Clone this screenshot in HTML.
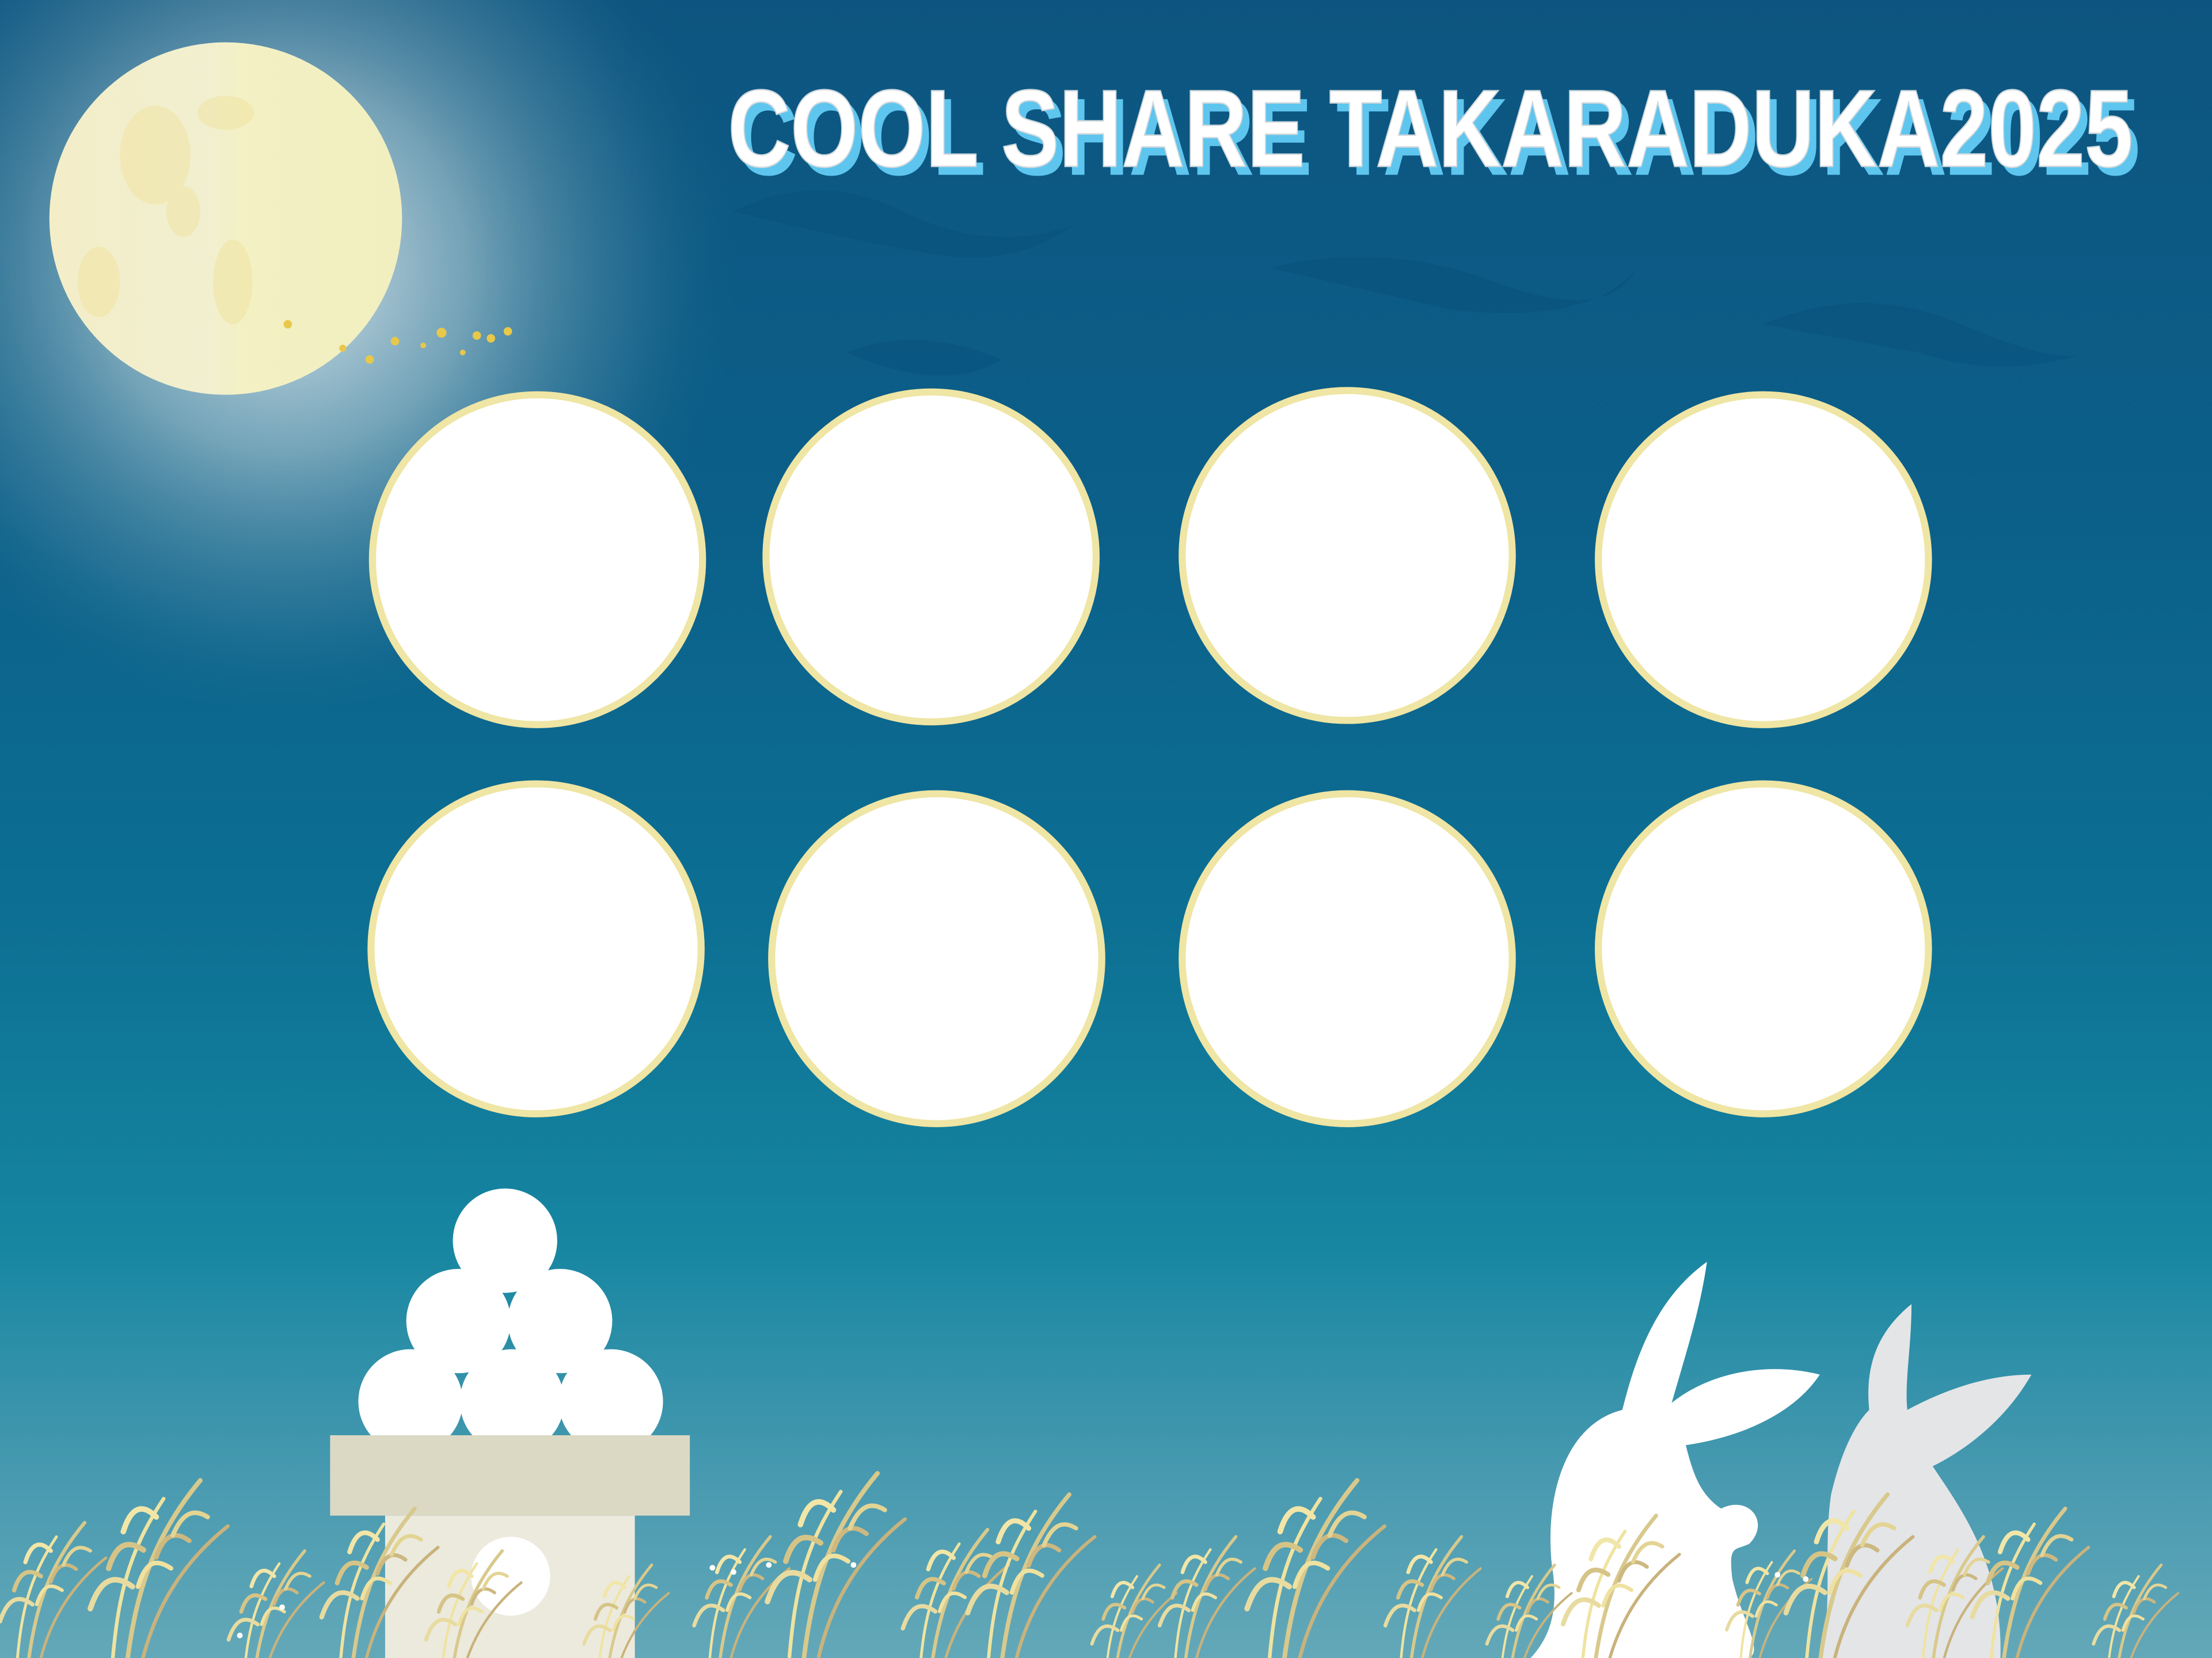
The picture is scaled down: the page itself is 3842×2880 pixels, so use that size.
<!DOCTYPE html>
<html><head><meta charset="utf-8"><style>html,body{margin:0;padding:0;overflow:hidden;background:#0c5e86}svg{display:block}</style></head>
<body>
<svg width="3842" height="2880" viewBox="0 0 1568 1176" preserveAspectRatio="none" xmlns="http://www.w3.org/2000/svg">
<defs>
<linearGradient id="bg" x1="0" y1="0" x2="0" y2="1">
<stop offset="0" stop-color="#0d5580"/><stop offset="0.3" stop-color="#0b5f89"/><stop offset="0.55" stop-color="#0c6f93"/><stop offset="0.75" stop-color="#1686a1"/><stop offset="0.9" stop-color="#4b9bb1"/><stop offset="1" stop-color="#63a8b8"/>
</linearGradient>
<radialGradient id="glow" cx="200" cy="190" r="330" gradientUnits="userSpaceOnUse">
<stop offset="0" stop-color="#ffffff" stop-opacity="0.85"/><stop offset="0.4" stop-color="#c8dde0" stop-opacity="0.55"/><stop offset="0.75" stop-color="#6c9fb3" stop-opacity="0.25"/><stop offset="1" stop-color="#0c5e86" stop-opacity="0"/>
</radialGradient>
<linearGradient id="moon" x1="0" y1="0" x2="1" y2="0">
<stop offset="0" stop-color="#f3eec8"/><stop offset="0.45" stop-color="#f2efd0"/><stop offset="0.55" stop-color="#f3f1c4"/><stop offset="1" stop-color="#f1efbf"/>
</linearGradient>
<g id="cl" fill="none" stroke-linecap="round">
<path d="M0 100 C5 60 15 30 40 0" stroke="#d8c98c" stroke-width="2.5"/>
<path d="M-8 100 C-5 65 0 40 20 10" stroke="#efe3a0" stroke-width="2"/>
<path d="M8 100 C15 70 30 45 55 25" stroke="#c9b37c" stroke-width="2"/>
<path d="M-20 70 C-15 55 -8 50 3 58" stroke="#e8dba0" stroke-width="3"/>
<path d="M-10 48 C-6 35 0 32 9 38" stroke="#d6c487" stroke-width="3"/>
<path d="M-2 28 C2 15 8 12 16 20" stroke="#f1e6a8" stroke-width="3"/>
<path d="M6 58 C10 45 15 42 24 48" stroke="#efe1a0" stroke-width="2.5"/>
<path d="M16 42 C20 30 26 27 34 33" stroke="#cdb880" stroke-width="2.5"/>
<path d="M25 30 C30 18 36 15 44 20" stroke="#e3d494" stroke-width="2.5"/>
</g>
</defs>
<rect width="1568" height="1176" fill="url(#bg)"/>
<g fill="#0a4a78" opacity="0.35">
<path d="M520 150 q60 -30 120 0 t120 10 q-40 30 -100 20 t-140 -30z"/>
<path d="M900 190 q80 -20 160 10 t100 -10 q-30 40 -130 30z"/>
<path d="M1250 230 q70 -30 140 0 t90 20 q-60 20 -120 0z"/>
<path d="M600 250 q50 -20 110 5 q-40 25 -110 -5z"/>
</g>
<circle cx="200" cy="190" r="330" fill="url(#glow)"/>
<circle cx="160" cy="155" r="125" fill="url(#moon)"/>
<g fill="#efe09a" opacity="0.45">
<ellipse cx="110" cy="110" rx="25" ry="35"/><ellipse cx="165" cy="200" rx="14" ry="30"/><ellipse cx="70" cy="200" rx="15" ry="25"/><ellipse cx="160" cy="80" rx="20" ry="12"/><ellipse cx="130" cy="150" rx="12" ry="18"/>
</g>
<g fill="#e8c84a"><circle cx="204" cy="230" r="3"/><circle cx="243" cy="247" r="2.5"/><circle cx="262" cy="255" r="3"/><circle cx="280" cy="242" r="3"/><circle cx="300" cy="245" r="2"/><circle cx="313" cy="236" r="3.5"/><circle cx="338" cy="238" r="3"/><circle cx="348" cy="240" r="3"/><circle cx="360" cy="235" r="3"/><circle cx="328" cy="250" r="2"/></g>
<g font-family="Liberation Sans, sans-serif" font-weight="bold" font-size="78">
<text x="521" y="124" textLength="996" lengthAdjust="spacingAndGlyphs" fill="#5ec5ee">COOL SHARE TAKARADUKA2025</text>
<text x="516" y="118" textLength="996" lengthAdjust="spacingAndGlyphs" fill="#ffffff" stroke="#cfd8dc" stroke-width="1">COOL SHARE TAKARADUKA2025</text>
</g>
<g fill="#ffffff" stroke="#efe5a4" stroke-width="5">
<circle cx="381" cy="397" r="117"/><circle cx="660" cy="395" r="117"/><circle cx="955" cy="394" r="117"/><circle cx="1250" cy="397" r="117"/>
<circle cx="380" cy="673" r="117"/><circle cx="664" cy="680" r="117"/><circle cx="955" cy="680" r="117"/><circle cx="1250" cy="673" r="117"/>
</g>
<g fill="#ffffff">
<circle cx="358" cy="880" r="37"/><circle cx="325" cy="937" r="37"/><circle cx="397" cy="937" r="37"/>
<circle cx="291" cy="994" r="37"/><circle cx="363" cy="994" r="37"/><circle cx="433" cy="994" r="37"/>
</g>
<rect x="234" y="1018" width="255" height="57" fill="#dbd9c4"/>
<rect x="273" y="1075" width="177" height="101" fill="#eceadd"/>
<circle cx="362" cy="1118" r="28" fill="#ffffff"/>
<path fill="#ffffff" d="M1150 1000 C1160 960 1175 920 1210 895 C1205 930 1195 960 1185 995 C1210 975 1250 965 1290 975 C1270 1005 1230 1020 1195 1025 C1200 1045 1205 1060 1220 1070 C1240 1060 1255 1080 1240 1095 C1230 1100 1225 1095 1228 1120 C1235 1150 1250 1170 1240 1176 L1085 1176 C1100 1160 1105 1140 1100 1110 C1095 1060 1110 1010 1150 1000 Z"/>
<path fill="#e4e5e7" d="M1325 1000 C1322 970 1330 945 1355 925 C1355 955 1350 980 1352 1000 C1380 985 1410 975 1440 975 C1420 1010 1390 1030 1370 1040 C1390 1070 1420 1110 1418 1176 L1290 1176 C1300 1140 1292 1100 1298 1060 C1305 1030 1315 1010 1325 1000 Z"/>
<g>
<use href="#cl" transform="translate(20,1080) scale(1.0)"/><use href="#cl" transform="translate(90,1050) scale(1.3)"/><use href="#cl" transform="translate(180,1100) scale(0.9)"/><use href="#cl" transform="translate(250,1070) scale(1.1)"/>
<use href="#cl" transform="translate(320,1100) scale(0.9)"/><use href="#cl" transform="translate(430,1110) scale(0.8)"/><use href="#cl" transform="translate(510,1090) scale(0.9)"/><use href="#cl" transform="translate(570,1045) scale(1.3)"/>
<use href="#cl" transform="translate(660,1085) scale(1.0)"/><use href="#cl" transform="translate(710,1060) scale(1.2)"/><use href="#cl" transform="translate(790,1110) scale(0.8)"/><use href="#cl" transform="translate(840,1090) scale(0.9)"/>
<use href="#cl" transform="translate(910,1050) scale(1.3)"/><use href="#cl" transform="translate(1000,1090) scale(0.9)"/><use href="#cl" transform="translate(1070,1110) scale(0.8)"/><use href="#cl" transform="translate(1130,1075) scale(1.1)"/>
<use href="#cl" transform="translate(1240,1100) scale(0.8)"/><use href="#cl" transform="translate(1290,1060) scale(1.2)"/><use href="#cl" transform="translate(1370,1090) scale(0.9)"/><use href="#cl" transform="translate(1420,1070) scale(1.1)"/>
<use href="#cl" transform="translate(1500,1110) scale(0.8)"/>
</g>
<g fill="#ffffff"><circle cx="505" cy="1112" r="2"/><circle cx="520" cy="1115" r="2"/><circle cx="545" cy="1110" r="2"/><circle cx="605" cy="1110" r="2"/><circle cx="200" cy="1140" r="2"/><circle cx="170" cy="1160" r="2"/><circle cx="1260" cy="1117" r="2"/><circle cx="1280" cy="1120" r="2"/></g>
</svg>
</body></html>
